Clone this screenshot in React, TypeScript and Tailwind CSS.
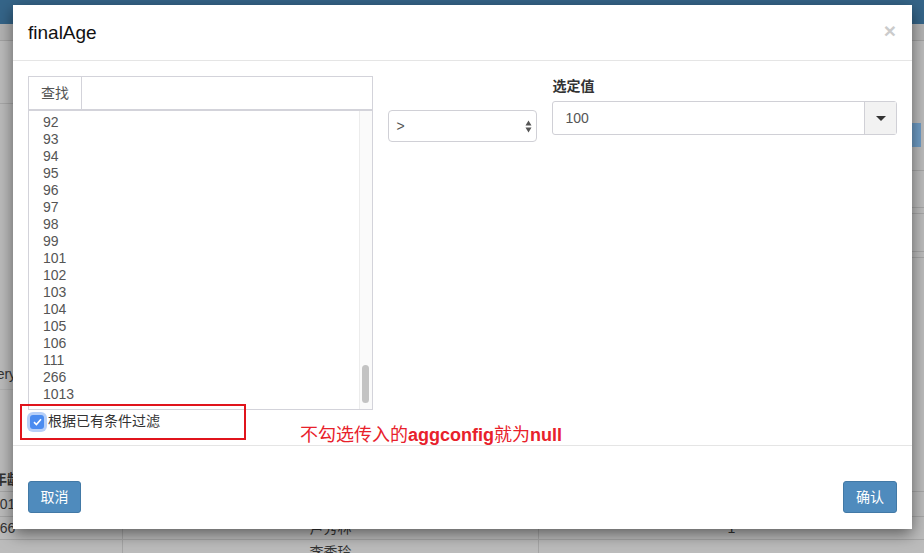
import React from "react";

const visibleAges = [
  "92", "93", "94", "95", "96", "97", "98", "99", "101",
  "102", "103", "104", "105", "106", "111", "266", "1013",
];

const SortArrows = () => (
  <svg width="7" height="13" viewBox="0 0 7 13" className="text-[#555]">
    <path d="M3.5 0.5 L6.5 5.5 L0.5 5.5 Z" fill="currentColor" />
    <path d="M3.5 12.5 L6.5 7.5 L0.5 7.5 Z" fill="currentColor" />
  </svg>
);

const Caret = () => (
  <svg width="10" height="5" viewBox="0 0 10 5">
    <path d="M0 0 L10 0 L5 5 Z" fill="#333" />
  </svg>
);

const BackPage = () => (
  <div className="w-full h-full flex flex-col bg-[#bcbcbc] text-[14px] text-[#333]">
    <div className="shrink-0 h-[24px] bg-[#356589]" />
    <div className="shrink-0 h-[17px] bg-[#b3b3b3] border-b border-[#a2a2a2]" />
    <div className="shrink-0 h-[426px] flex">
      <div className="w-[122px] flex flex-col">
        <div className="h-[63px] border-b border-[#a8a8a8]" />
        <div className="h-[256px]" />
        <div className="h-[30px] flex items-center border-b border-[#b0b0b0]">
          <span className="ml-[-22px]">Query</span>
        </div>
      </div>
      <div className="flex-1 flex flex-col">
        <div className="h-[82px]" />
        <div className="h-[24px] flex justify-end pr-[3px]">
          <div className="w-[60px] h-full bg-[#6f9dc6]" />
        </div>
        <div className="h-[24px] border-b border-[#a6a6a6]" />
        <div className="h-[37px] border-b border-[#a6a6a6]" />
        <div className="h-[6px] border-b border-[#a6a6a6]" />
        <div className="h-[38px] border-b border-[#a6a6a6]" />
        <div className="h-[6px] border-b border-[#a6a6a6]" />
      </div>
    </div>
    <div className="shrink-0 grid grid-cols-[122px_416px_1fr]">
      <div className="h-[25px] flex items-center border-b border-[#a6a6a6]">
        <span className="ml-[-7px] font-bold">年龄</span>
      </div>
      <div className="h-[25px] border-b border-l border-[#a6a6a6]" />
      <div className="h-[25px] border-b border-l border-[#a6a6a6]" />
      <div className="h-[25px] flex items-center border-b border-[#a6a6a6]">
        <span className="ml-[-8px]">1013</span>
      </div>
      <div className="h-[25px] border-b border-l border-[#a6a6a6]" />
      <div className="h-[25px] border-b border-l border-[#a6a6a6]" />
      <div className="h-[23px] flex items-center border-b border-[#a6a6a6]">
        <span className="ml-[-8px]">266</span>
      </div>
      <div className="h-[23px] flex items-center justify-center border-b border-l border-[#a6a6a6]">
        卢秀林
      </div>
      <div className="h-[23px] flex items-center justify-center border-b border-l border-[#a6a6a6]">
        1
      </div>
      <div className="h-[24px]" />
      <div className="h-[24px] flex items-center justify-center border-l border-[#a6a6a6]">
        李秀玲
      </div>
      <div className="h-[24px] border-l border-[#a6a6a6]" />
    </div>
  </div>
);

const App = () => {
  return (
    <div className="relative w-[924px] h-[553px] overflow-hidden font-['Liberation_Sans','Noto_Sans_CJK_SC',sans-serif]">
      <BackPage />

      <div className="absolute left-[13px] top-[5px] w-[899px] h-[524px] bg-white shadow-[0_5px_15px_rgba(0,0,0,0.5)] flex flex-col">
        <div className="h-[56px] px-[15px] flex items-center justify-between border-b border-[#e5e5e5]">
          <h4 className="text-[19px] text-[#111] leading-[25px]">finalAge</h4>
          <span className="text-[21px] font-bold text-[#cbcbcb] leading-none mr-[1px] mt-[-4px]">
            ×
          </span>
        </div>

        <div className="relative h-[384px] px-[15px] pt-[15px] flex gap-[15px] text-[14px]">
          <div className="w-[345px] flex flex-col">
            <div className="h-[34px] flex border border-[#d3d3da] text-[#555]">
              <div className="w-[53px] flex items-center justify-center border-r border-[#d3d3da]">
                查找
              </div>
              <div className="flex-1" />
            </div>
            <div className="h-[300px] flex border border-[#d3d3da]">
              <div className="flex-1 pl-[14px] pt-[3px] leading-[17px] text-[#555]">
                {visibleAges.map((age) => (
                  <div key={age}>{age}</div>
                ))}
              </div>
              <div className="w-[13px] bg-[#fafafa] border-l border-[#ececec] flex flex-col justify-end items-center pb-[6px]">
                <div className="w-[7px] h-[38px] rounded-full bg-[#c3c3c3]" />
              </div>
            </div>
            <label className="mt-[1px] flex items-center gap-[4px] text-[#333]">
              <span className="ml-[2px] w-[14px] h-[14px] rounded-[3px] bg-[#4b8cf0] shadow-[0_0_0_3px_rgba(96,150,240,0.45)] flex items-center justify-center">
                <svg width="9" height="8" viewBox="0 0 9 8">
                  <path d="M1 4.2 L3.4 6.5 L8 1.2" stroke="white" strokeWidth="1.6" fill="none" />
                </svg>
              </span>
              根据已有条件过滤
            </label>
          </div>

          <div className="w-[150px] mt-[34px]">
            <div className="h-[32px] border border-[#d0d0d6] rounded-[4px] flex items-center justify-between pl-[8px] pr-[4px] text-[#555]">
              <span>&gt;</span>
              <SortArrows />
            </div>
          </div>

          <div className="w-[345px] flex flex-col">
            <div className="h-[20px] leading-[20px] font-bold text-[#333]">选定值</div>
            <div className="mt-[5px] h-[34px] flex border border-[#d0d0d6] rounded-[3px] text-[#555]">
              <div className="flex-1 flex items-center pl-[12px]">100</div>
              <div className="w-[32px] bg-[#f2f2f2] border-l border-[#d0d0d6] flex items-center justify-center">
                <Caret />
              </div>
            </div>
          </div>

          <div className="absolute left-[7px] top-[343px] w-[226px] h-[36px] border-2 border-[#e0141c]" />
          <div className="absolute left-[287px] top-[363px] text-[18px] text-[#e8212b] leading-[22px]">
            不勾选传入的<span className="font-bold">aggconfig</span>就为<span className="font-bold">null</span>
          </div>
        </div>

        <div className="flex-1 border-t border-[#e5e5e5] px-[15px] pt-[35px] flex justify-between items-start">
          <button className="w-[53px] h-[32px] rounded-[3px] bg-[#4f8bbd] border border-[#4279a6] text-white text-[14px]">
            取消
          </button>
          <button className="w-[54px] h-[32px] rounded-[3px] bg-[#4f8bbd] border border-[#4279a6] text-white text-[14px]">
            确认
          </button>
        </div>
      </div>
    </div>
  );
};

export default App;
